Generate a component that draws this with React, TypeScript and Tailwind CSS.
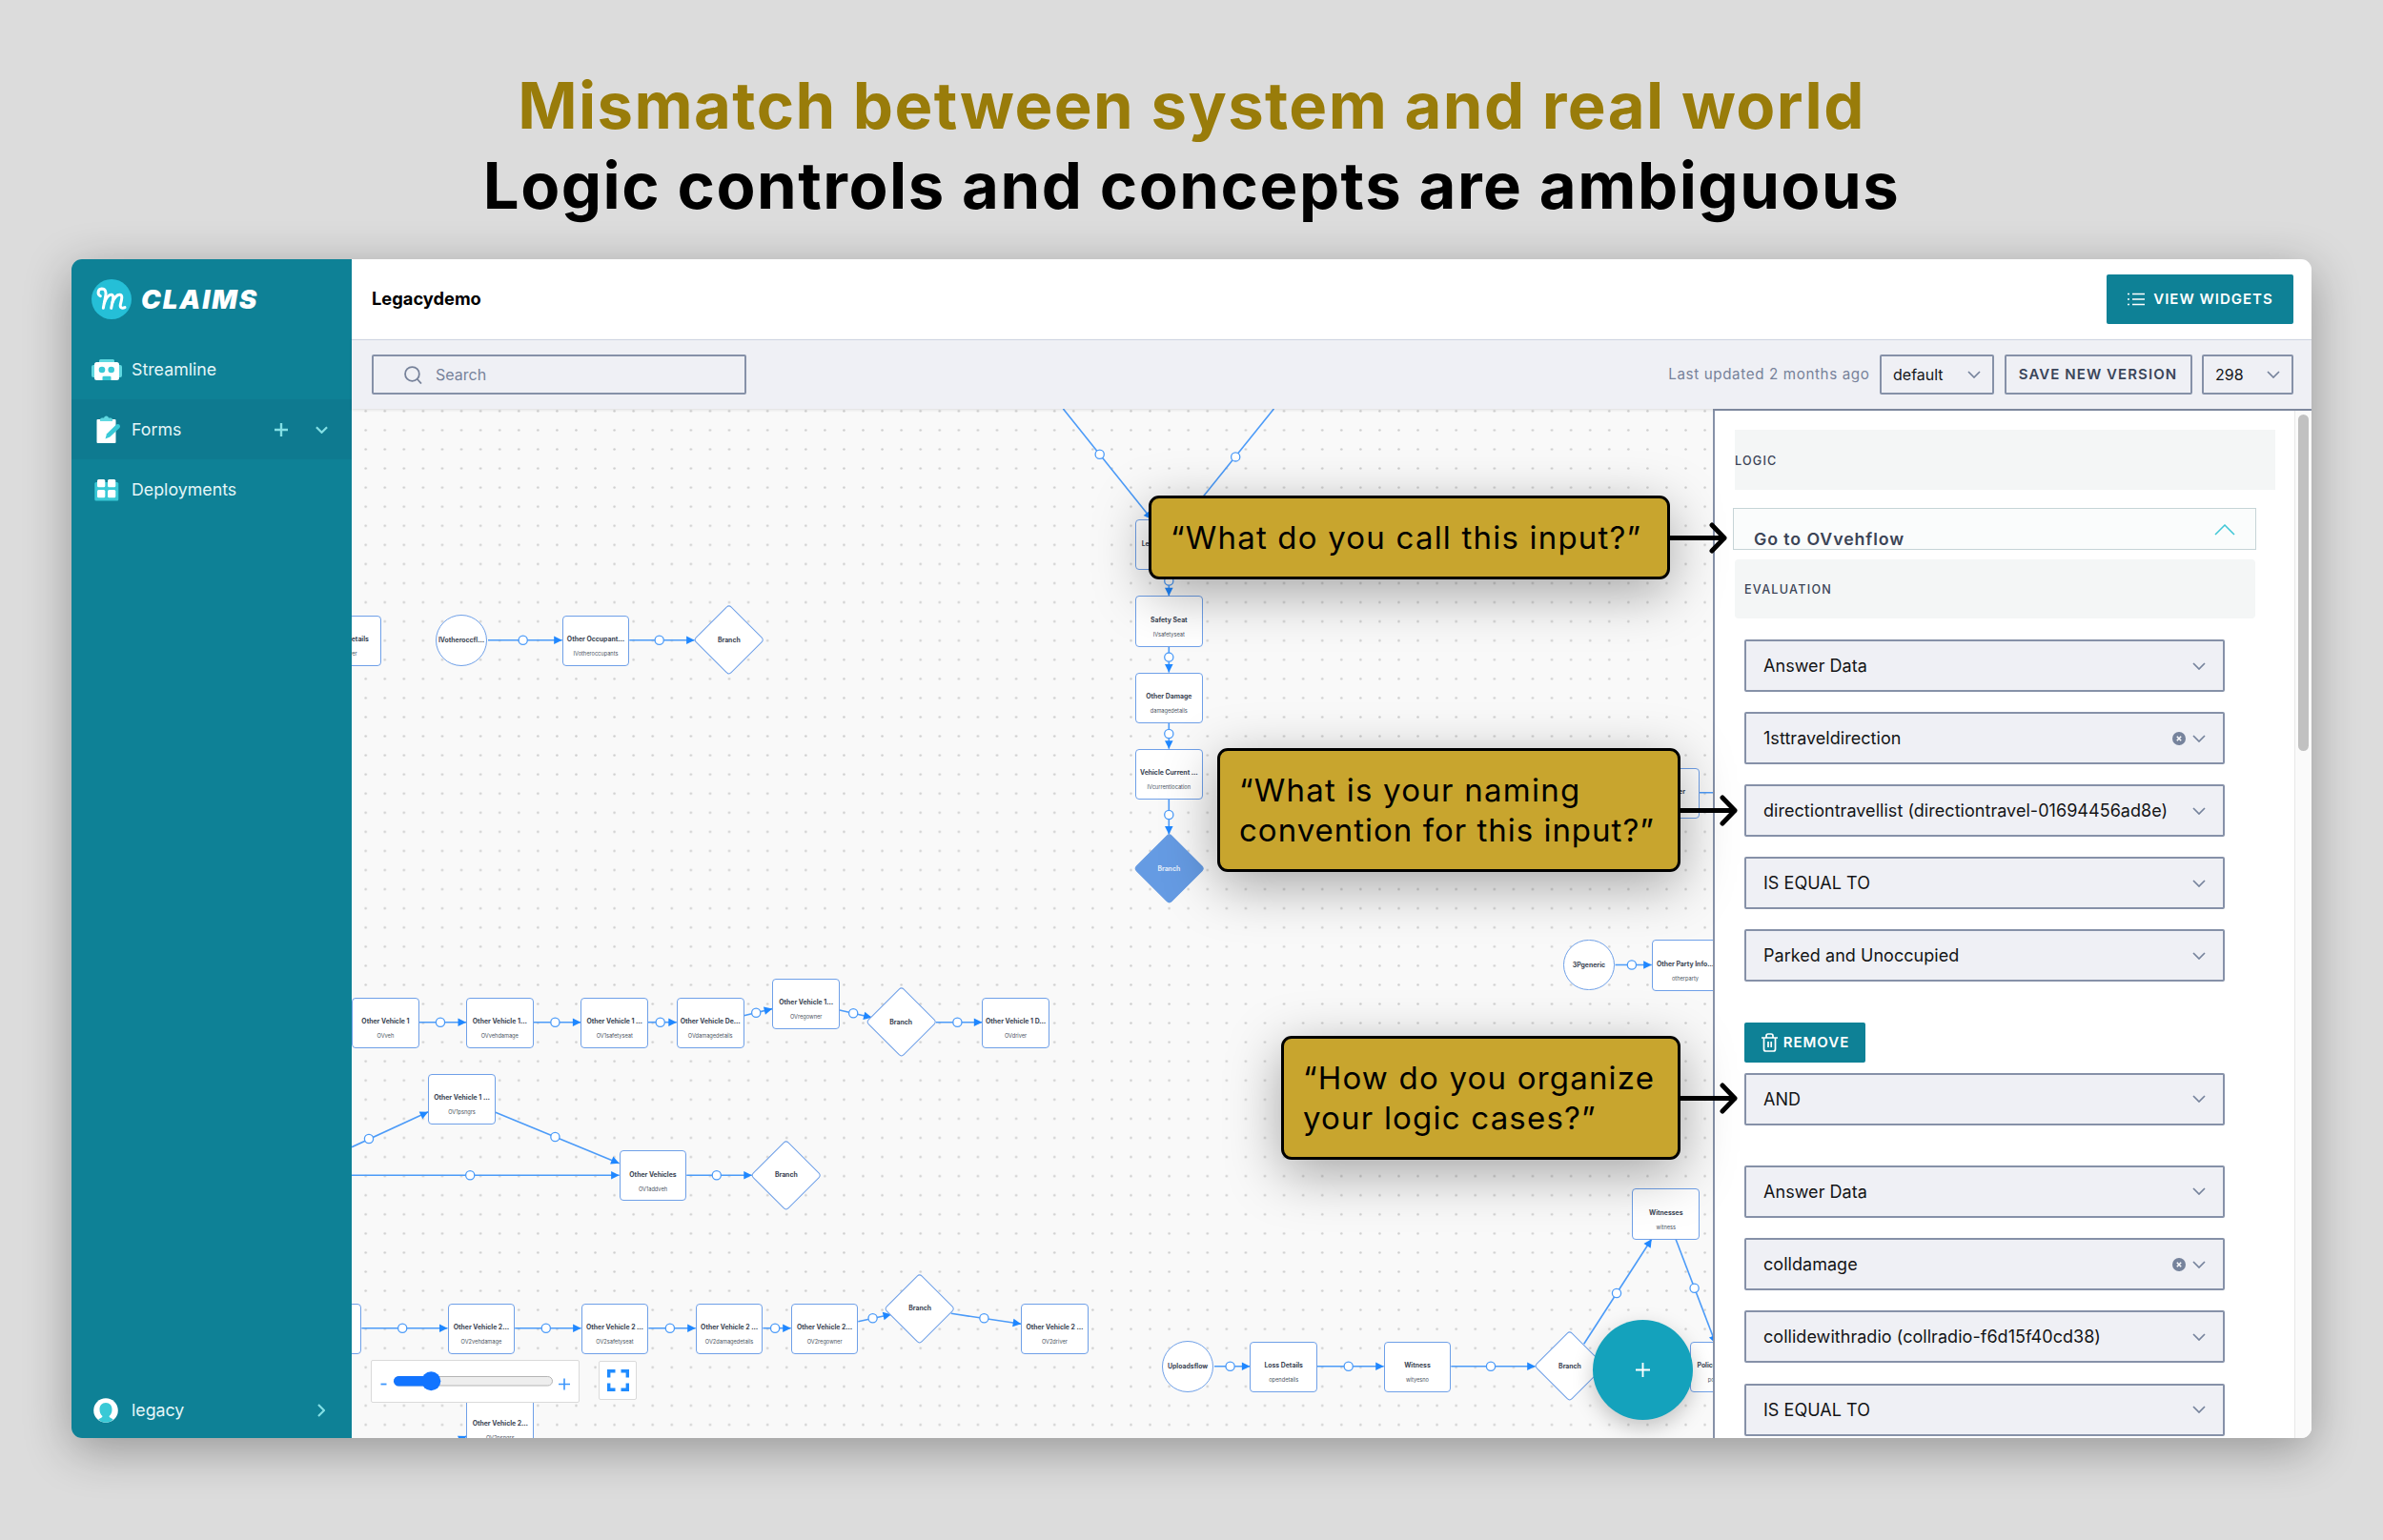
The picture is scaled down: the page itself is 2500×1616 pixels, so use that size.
import React from 'react';

/* ---------- icons ---------- */

const ChevronDown = ({ className = 'h-[8px] w-[14px] text-[#76839c]' }: { className?: string }) => (
  <svg viewBox="0 0 14 8" className={className} fill="none" stroke="currentColor" strokeWidth="1.7">
    <path d="M1 1l6 6 6-6" />
  </svg>
);

const LogoMark = () => (
  <svg viewBox="62 37 126 126" className="h-[42px] w-[42px] shrink-0">
    <circle cx="125" cy="100" r="63" fill="#25bfd7" />
    <g fill="none" stroke="#fff" strokeWidth="9" strokeLinecap="round" strokeLinejoin="round">
      <path d="M90 90C80 86 81 68 94 67c12 0 15 10 12 24l-7 37" />
      <path d="M102 113c5-17 15-28 22-27 8 1 7 9 5 18l-5 24" />
      <path d="M128 110c5-15 15-25 23-24 8 1 7 9 5 18l-3 13c-2 9 4 13 14 9" />
    </g>
  </svg>
);

const RobotIcon = () => (
  <svg viewBox="0 0 32 24" className="h-[24px] w-[32px]">
    <rect x="8" y="1" width="16" height="6" rx="1.5" fill="#5fd8e0" />
    <rect x="0" y="7" width="32" height="13" rx="2" fill="#5fd8e0" />
    <rect x="3" y="4" width="26" height="19" rx="2.5" fill="#fff" />
    <circle cx="11" cy="12" r="3.3" fill="#39c9d6" />
    <circle cx="20.7" cy="12" r="3.3" fill="#39c9d6" />
    <path d="M11.5 23v-3q0-1.300 1.300-1.300h6.400q1.300 0 1.300 1.300v3z" fill="#39c9d6" />
  </svg>
);

const ClipboardIcon = () => (
  <svg viewBox="0 0 26 30" className="ml-[5px] h-[30px] w-[26px]">
    <rect x="0.500" y="4" width="20" height="25" rx="1" fill="#fff" />
    <path d="M4 6V4.500Q4 2.500 6 2.500h2Q8.500.500 10.500.500T13 2.500h2q2 0 2 2V6z" fill="#5fd8e0" />
    <path d="M9.500 24.500l1.500-5.200L21 9.600q1.700-1.300 3.300 0 1.400 1.700.2 3.300L14.300 22.600z" fill="#39c9d6" />
  </svg>
);

const DeployIcon = () => (
  <svg viewBox="0 0 26 24" className="ml-[3px] h-[24px] w-[26px]">
    <rect x="0.300" y="4" width="25" height="19.500" rx="1.500" fill="#39c9d6" />
    <rect x="3" y="1" width="8.300" height="8.300" rx="1.500" fill="#fff" />
    <rect x="14" y="1" width="8.300" height="8.300" rx="1.500" fill="#fff" />
    <rect x="3" y="12" width="8.300" height="8.300" rx="1.500" fill="#fff" />
    <rect x="14" y="12" width="8.300" height="8.300" rx="1.500" fill="#fff" />
  </svg>
);

const UserIcon = () => (
  <svg viewBox="0 0 26 26" className="ml-[2px] h-[26px] w-[26px]">
    <circle cx="13" cy="13" r="12.800" fill="#fff" />
    <path
      d="M13 5c4.200 0 6.500 3.200 6.500 7 0 3-1 5.600-3 7 0 1.500 2 1.800 4.300 3.500Q17.500 25.800 13 25.800T5.200 22.500C7.500 20.800 9.500 20.500 9.500 19c-2-1.400-3-4-3-7 0-3.800 2.300-7 6.500-7z"
      fill="#39c9d6"
    />
  </svg>
);

/* ---------- sidebar ---------- */

function NavItem({ icon, label, active }: { icon: React.ReactNode; label: string; active?: boolean }) {
  return (
    <div className={`flex h-[63px] items-center pl-[21px] text-[17.8px] text-[#e4f6f8] ${active ? 'bg-[#0e7a90]' : ''}`}>
      <div className="flex w-[42px] items-center">{icon}</div>
      <span className="pt-[2px]">{label}</span>
      {active && (
        <div className="ml-auto mr-[25px] flex items-center gap-[29px] text-[#83dfe4]">
          <svg viewBox="0 0 14 14" className="h-[14px] w-[14px]" stroke="currentColor" strokeWidth="2.400">
            <path d="M7 0v14M0 7h14" />
          </svg>
          <ChevronDown className="h-[8px] w-[13px] stroke-[2.400] text-[#83dfe4]" />
        </div>
      )}
    </div>
  );
}

function Sidebar() {
  return (
    <aside className="flex w-[294px] shrink-0 flex-col bg-[#0e8196]">
      <div className="flex h-[83px] items-center gap-[10px] pl-[21px]">
        <LogoMark />
        <span className="pt-[3px] text-[27.800px] font-black italic tracking-[1.900px] text-white">CLAIMS</span>
      </div>
      <div className="pt-[1px]">
        <NavItem icon={<RobotIcon />} label="Streamline" />
        <NavItem icon={<ClipboardIcon />} label="Forms" active />
        <NavItem icon={<DeployIcon />} label="Deployments" />
      </div>
      <div className="mt-auto flex h-[59px] items-center pl-[21px] text-[17.800px] text-[#e4f6f8]">
        <div className="w-[42px]">
          <UserIcon />
        </div>
        <span className="pt-[1px]">legacy</span>
        <svg viewBox="0 0 8 14" className="ml-auto mr-[28px] h-[14px] w-[8px]" fill="none" stroke="#83dfe4" strokeWidth="2.200">
          <path d="M1 1l6 6-6 6" />
        </svg>
      </div>
    </aside>
  );
}

/* ---------- header and toolbar ---------- */

function Header() {
  return (
    <header className="flex h-[84px] shrink-0 items-center justify-between bg-white pl-[21px] pr-[19px]">
      <h1 className="text-[18.300px] font-bold text-black">Legacydemo</h1>
      <button className="flex h-[52px] w-[196px] items-center justify-center gap-[9px] rounded-[2px] bg-[#0e8196] pl-[1px] text-[15px] font-semibold tracking-[1px] text-white">
        <svg viewBox="0 0 18 14" className="h-[14px] w-[18px]" stroke="#fff" strokeWidth="1.700">
          <path d="M5 1.500h13M5 7h13M5 12.500h13" />
          <path d="M0 1.500h2M0 7h2M0 12.500h2" />
        </svg>
        VIEW WIDGETS
      </button>
    </header>
  );
}

function Toolbar() {
  return (
    <div className="relative z-10 flex h-[73px] shrink-0 items-center border-t-[1.500px] border-[#cfd4e2] bg-[#eff0f5] pl-[21px] pr-[19px] shadow-[0_1px_3px_rgba(0,0,0,0.12)]">
      <div className="flex h-[42px] w-[393px] items-center rounded-[2px] border-[2px] border-[#8691a8] pl-[32px] text-[16px] text-[#77829a]">
        <svg viewBox="0 0 18 18" className="mr-[14px] h-[19px] w-[19px]" fill="none" stroke="#77829a" strokeWidth="1.700">
          <circle cx="8" cy="8" r="7" />
          <path d="M13 13l4 4.500" />
        </svg>
        Search
      </div>
      <div className="ml-auto flex items-center gap-[10.500px] text-[16px] text-[#15171a]">
        <span className="text-[15.200px] tracking-[0.620px] text-[#77829a]">Last updated 2 months ago</span>
        <div className="flex h-[42px] w-[120px] items-center justify-between rounded-[2px] border-[2px] border-[#8691a8] px-[12px]">
          default <ChevronDown />
        </div>
        <button className="h-[42px] w-[197px] whitespace-nowrap rounded-[2px] border-[2px] border-[#8691a8] text-[15px] font-semibold tracking-[1.070px] text-[#3b465a]">
          SAVE NEW VERSION
        </button>
        <div className="flex h-[42px] w-[96px] items-center justify-between rounded-[2px] border-[2px] border-[#8691a8] px-[12px]">
          298 <ChevronDown />
        </div>
      </div>
    </div>
  );
}

/* ---------- flow canvas ---------- */

const OX = 369;
const OY = 429;

type Box = [number, number, string, string];

const boxes: Box[] = [
  [364.3, 672, 'Driver Details', 'IVdriver'],
  [625, 672, 'Other Occupant…', 'IVotheroccupants'],
  [1226.3, 571.6, 'Legal Guardian…', 'IVguardian'],
  [1226.3, 651.8, 'Safety Seat', 'IVsafetyseat'],
  [1226.3, 732, 'Other Damage', 'damagedetails'],
  [1226.3, 812.2, 'Vehicle Current …', 'IVcurrentlocation'],
  [1747.4, 832.2, 'Other Driver', 'driver'],
  [1768, 1012.7, 'Other Party Info…', 'otherparty'],
  [404.4, 1073, 'Other Vehicle 1', 'OVveh'],
  [524.3, 1073, 'Other Vehicle 1…', 'OVvehdamage'],
  [644.7, 1073, 'Other Vehicle 1 …', 'OV1safetyseat'],
  [745.2, 1073, 'Other Vehicle De…', 'OVdamagedetails'],
  [845.7, 1053, 'Other Vehicle 1…', 'OVregowner'],
  [1065.6, 1073, 'Other Vehicle 1 D…', 'OVdriver'],
  [484.5, 1153, 'Other Vehicle 1 …', 'OV1psngrs'],
  [685, 1233.3, 'Other Vehicles', 'OV1addveh'],
  [344, 1394, '', ''],
  [504.9, 1394, 'Other Vehicle 2…', 'OV2vehdamage'],
  [645, 1394, 'Other Vehicle 2 …', 'OV2safetyseat'],
  [765.1, 1394, 'Other Vehicle 2 …', 'OV2damagedetails'],
  [865.1, 1394, 'Other Vehicle 2…', 'OV2regowner'],
  [1106.4, 1394, 'Other Vehicle 2 …', 'OV2driver'],
  [524.8, 1494.7, 'Other Vehicle 2…', 'OV2psngrs'],
  [1346.7, 1434, 'Loss Details', 'opendetails'],
  [1487, 1434, 'Witness', 'wityesno'],
  [1808, 1434, 'Police Report I…', 'policereport'],
  [1747.8, 1273.7, 'Witnesses', 'witness'],
];

const starts: [number, number, string][] = [
  [484, 672, 'IVotheroccfl…'],
  [1666.9, 1012.7, '3Pgeneric'],
  [1246.1, 1434, 'Uploadsflow'],
];

const branches: [number, number, boolean][] = [
  [764.8, 671.8, false],
  [1226.3, 912.1, true],
  [945.2, 1072.8, false],
  [824.8, 1233.2, false],
  [965.1, 1373.5, false],
  [1647, 1433.8, false],
];

// x1, y1, x2, y2, handle x, handle y
const edges: [number, number, number, number, number, number][] = [
  [512, 671.7, 589.7, 671.7, 548.7, 671.7],
  [660.3, 671.7, 728.6, 671.7, 691.7, 671.7],
  [1115.4, 429, 1208.3, 545, 1153.7, 476.7],
  [1336.4, 429, 1243, 545, 1296.2, 479.4],
  [1226.3, 598, 1226.3, 625.3, 1226.3, 609.6],
  [1226.3, 678.4, 1226.3, 705.6, 1226.3, 689.6],
  [1226.3, 758.5, 1226.3, 785.7, 1226.3, 770],
  [1226.3, 838.8, 1226.3, 875.5, 1226.3, 855],
  [1782.8, 831.8, 1840, 831.8, 1830, 831.8],
  [1694.500, 1012.5, 1732.7, 1012.5, 1711.9, 1012.5],
  [439.7, 1072.7, 489, 1072.7, 462, 1072.7],
  [559.6, 1072.7, 609.4, 1072.7, 582.4, 1072.7],
  [680, 1072.7, 709.8, 1072.7, 692.7, 1072.7],
  [780.4, 1065.7, 810.2, 1058.6, 793.2, 1062.7],
  [880.9, 1060, 914.6, 1067.8, 895.2, 1063.3],
  [982, 1072.7, 1030.3, 1072.7, 1004.4, 1072.7],
  [369, 1203.7, 449.2, 1166.8, 387, 1195],
  [519.8, 1167.3, 649.6, 1220.7, 582.4, 1193],
  [369, 1233.3, 649.6, 1233.3, 493.2, 1233.3],
  [720.3, 1233.3, 788.8, 1233.3, 751.8, 1233.3],
  [379.4, 1393.7, 469.500, 1393.7, 422.2, 1393.7],
  [540.2, 1393.7, 609.6, 1393.7, 572.8, 1393.7],
  [680.4, 1393.7, 729.7, 1393.7, 702.9, 1393.7],
  [800.4, 1393.7, 829.7, 1393.7, 813.1, 1393.7],
  [900.3, 1386.7, 935, 1379.3, 915.6, 1383.2],
  [997.8, 1378.3, 1071.2, 1389.3, 1032.4, 1383.3],
  [409, 1544, 489.5, 1507, 440, 1530],
  [1274, 1433.7, 1311.4, 1433.7, 1290.6, 1433.7],
  [1382, 1433.7, 1451.7, 1433.7, 1414.7, 1433.7],
  [1522.3, 1433.7, 1610.7, 1433.7, 1564, 1433.7],
  [1661.7, 1410.3, 1732.7, 1300.3, 1696, 1357],
  [1758, 1300.3, 1800, 1410, 1777.6, 1351.7],
];

function Canvas() {
  return (
    <div className="relative w-[1428px] shrink-0 overflow-hidden bg-[#f9f9f9]">
      <svg viewBox="369 429 1428 1080" className="absolute inset-0 h-full w-full">
        <defs>
          <pattern id="dots" x="373.700" y="421.300" width="20.070" height="20.070" patternUnits="userSpaceOnUse">
            <circle cx="10" cy="10" r="1.250" fill="#cdcdcd" />
          </pattern>
        </defs>
        <rect x="369" y="429" width="1428" height="1080" fill="url(#dots)" />
        {edges.map(([x1, y1, x2, y2, hx, hy], i) => {
          const angle = (Math.atan2(y2 - y1, x2 - x1) * 180) / Math.PI;
          return (
            <g key={i}>
              <line x1={x1} y1={y1} x2={x2} y2={y2} stroke="#4c9bf8" strokeWidth="1.600" />
              <path d="M0 0l-8.500-4.300v8.600z" fill="#1f87ff" transform={`translate(${x2} ${y2}) rotate(${angle})`} />
              <circle cx={hx} cy={hy} r="4.600" fill="#fff" stroke="#4c9bf8" strokeWidth="1.300" />
            </g>
          );
        })}
      </svg>
      {boxes.map(([x, y, title, sub], i) => (
        <div
          key={i}
          style={{ left: x - OX - 35.4, top: y - OY - 26.5 }}
          className="absolute h-[53.400px] w-[70.800px] rounded-[4px] border border-[#6fa0e8] bg-white text-center"
        >
          <div className="mt-[19.800px] whitespace-nowrap text-[6.870px] font-bold leading-[10px] text-[#3a4453]">{title}</div>
          <div className="mt-[5px] whitespace-nowrap text-[5.650px] leading-[10px] text-[#4c5563]">{sub}</div>
        </div>
      ))}
      {starts.map(([x, y, title]) => (
        <div
          key={title}
          style={{ left: x - OX - 26.7, top: y - OY - 26.7 }}
          className="absolute flex h-[53.400px] w-[53.400px] items-center justify-center whitespace-nowrap rounded-full border border-[#6fa0e8] bg-white text-[6.870px] font-bold text-[#3a4453]"
        >
          {title}
        </div>
      ))}
      {branches.map(([x, y, selected]) => (
        <div
          key={`${x}`}
          style={{ left: x - OX - 26.7, top: y - OY - 26.7 }}
          className="absolute flex h-[53.400px] w-[53.400px] items-center justify-center"
        >
          <div
            className={`absolute inset-0 rotate-45 rounded-[4px] border ${
              selected ? 'border-[#659be3] bg-[#659be3]' : 'border-[#6fa0e8] bg-white'
            }`}
          />
          <span className={`relative text-[6.870px] font-bold ${selected ? 'text-[#e3edfa]' : 'text-[#3a4453]'}`}>Branch</span>
        </div>
      ))}

      <div className="absolute bottom-[37.500px] left-[20px] flex h-[45px] w-[219px] items-center rounded-[2px] border-[1.500px] border-[#dadada] bg-white pl-[9px]">
        <svg viewBox="0 0 200 30" className="h-[30px] w-[200px]">
          <path d="M0.500 18.500h6" stroke="#3d96fb" strokeWidth="1.800" />
          <path d="M187 18.500h12M193 12.500v12" stroke="#3d96fb" strokeWidth="1.600" />
          <rect x="14.500" y="10.500" width="166" height="9.500" rx="4.750" fill="#eeeeee" stroke="#b5b5b5" />
          <rect x="14" y="10" width="42" height="10.500" rx="5.250" fill="#1274ff" />
          <circle cx="53.300" cy="15.300" r="10" fill="#1274ff" />
        </svg>
      </div>
      <div className="absolute bottom-[40px] left-[259px] flex h-[41px] w-[40px] items-center justify-center rounded-[2px] border-[1.500px] border-[#dadada] bg-white">
        <svg viewBox="0 0 23 23" className="h-[23px] w-[23px]" fill="none" stroke="#1f8bff" strokeWidth="3.400">
          <path d="M1.700 8.500V1.700H8.500M14.500 1.700h6.800v6.800M21.300 14.500v6.800h-6.800M8.500 21.300H1.700v-6.800" />
        </svg>
      </div>
      <button className="absolute bottom-[19px] left-[1302px] flex h-[105px] w-[105px] items-center justify-center rounded-full bg-[#14a2bc] shadow-[0_8px_22px_rgba(0,0,0,0.22)]">
        <svg viewBox="0 0 16 16" className="h-[15px] w-[15px]" stroke="#fff" strokeWidth="2">
          <path d="M8 0v16M0 8h16" />
        </svg>
      </button>
    </div>
  );
}

/* ---------- logic panel ---------- */

function Field({ value, clearable }: { value: string; clearable?: boolean }) {
  return (
    <div className="flex h-[55px] w-[504px] shrink-0 items-center rounded-[2px] border-[2px] border-[#8691a8] bg-[#eff0f5] pl-[18px] pr-[18px] text-[18px] tracking-[0.040px] text-[#131416]">
      <span className="whitespace-nowrap">{value}</span>
      <div className="ml-auto flex items-center gap-[7px]">
        {clearable && (
          <svg viewBox="0 0 14 14" className="h-[14px] w-[14px]">
            <circle cx="7" cy="7" r="7" fill="#76839c" />
            <path d="M4.800 4.800l4.400 4.400M9.200 4.800L4.800 9.200" stroke="#fff" strokeWidth="1.500" />
          </svg>
        )}
        <ChevronDown />
      </div>
    </div>
  );
}

function LogicPanel() {
  return (
    <div className="flex min-w-0 flex-1 border-l-[2px] border-t-[2px] border-[#8691a8] bg-white shadow-[0_0_24px_rgba(0,0,0,0.14)]">
      <div className="flex flex-1 flex-col overflow-hidden pl-[21px] pt-[20px]">
        <div className="flex h-[63px] w-[567px] shrink-0 items-center bg-[#f4f6f6] pt-[3px] text-[12.600px] font-medium tracking-[1.200px] text-[#3b4456]">
          LOGIC
        </div>
        <div className="-ml-[2px] mt-[19px] flex h-[44px] w-[549px] shrink-0 items-center justify-between border-[1.500px] border-[#c6d4d7] bg-[#fafcfc] pl-[21px] pr-[21px]">
          <span className="mt-[21px] text-[17.800px] font-semibold leading-none tracking-[0.900px] text-[#3b4456]">Go to OVvehflow</span>
          <svg viewBox="0 0 22 12" className="mt-[2px] h-[12px] w-[22px]" fill="none" stroke="#3fc6d6" strokeWidth="1.500">
            <path d="M1 11L11 1l10 10" />
          </svg>
        </div>
        <div className="mt-[10px] flex h-[62px] w-[546px] shrink-0 items-center rounded-[4px] bg-[#f4f6f6] pl-[10px] pt-[2px] text-[12.600px] font-medium tracking-[1.270px] text-[#3b4456]">
          EVALUATION
        </div>
        <div className="mt-[22px] flex flex-col gap-[21.100px] pl-[10px]">
          <Field value="Answer Data" />
          <Field value="1sttraveldirection" clearable />
          <Field value="directiontravellist (directiontravel-01694456ad8e)" />
          <Field value="IS EQUAL TO" />
          <Field value="Parked and Unoccupied" />
        </div>
        <div className="mt-[42.500px] flex shrink-0 flex-col gap-[11px] pl-[10px]">
          <button className="flex h-[42px] w-[127px] items-center justify-center gap-[6px] rounded-[2px] bg-[#0e8196] pl-[1px] text-[15px] font-semibold tracking-[1px] text-white">
            <svg viewBox="0 0 17 20" className="h-[20px] w-[17px]" fill="none" stroke="#fff" strokeWidth="1.700">
              <path d="M0 5h17M5 5V3q0-2 2-2h3q2 0 2 2v2M2.500 5v12q0 2 2 2h8q2 0 2-2V5M7 9v6M10.200 9v6" />
            </svg>
            REMOVE
          </button>
          <Field value="AND" />
        </div>
        <div className="mt-[42px] flex flex-col gap-[21.300px] pl-[10px]">
          <Field value="Answer Data" />
          <Field value="colldamage" clearable />
          <Field value="collidewithradio (collradio-f6d15f40cd38)" />
          <Field value="IS EQUAL TO" />
        </div>
      </div>
      <div className="flex w-[18px] shrink-0 justify-center border-l border-[#e8e8e8] bg-[#fafafa] pt-[4px]">
        <div className="h-[353px] w-[11px] rounded-full bg-[#c1c1c1]" />
      </div>
    </div>
  );
}

/* ---------- annotations ---------- */

function Callout({ place, arrow, children }: { place: string; arrow: number; children: React.ReactNode }) {
  return (
    <div
      className={`absolute flex items-center rounded-[11px] border-[3px] border-black bg-[#c8a52e] pb-px pl-[20px] text-[33px] leading-[42px] text-black shadow-[0_14px_56px_rgba(0,0,0,0.34)] ${place}`}
    >
      <div className="whitespace-nowrap">{children}</div>
      <svg
        viewBox={`0 0 ${arrow} 36`}
        style={{ width: arrow, height: 36 }}
        className="absolute left-full top-1/2 -translate-y-1/2"
        fill="none"
        stroke="#000"
        strokeWidth="5"
        strokeLinejoin="round"
        strokeLinecap="round"
      >
        <path d={`M0 18.500H${arrow - 3}M${arrow - 16} 5L${arrow - 3} 18.500L${arrow - 16} 32`} />
      </svg>
    </div>
  );
}

export default function App() {
  return (
    <div className="relative flex h-[1616px] w-[2500px] flex-col overflow-hidden bg-[#dcdcdc] font-['Inter',sans-serif]">
      <div className="h-[272px] shrink-0 pt-[69px] text-center text-[67px] font-bold leading-[83.700px]">
        <p className="tracking-[1.400px] text-[#997c0a]">Mismatch between system and real world</p>
        <p className="tracking-[1.500px] text-black">Logic controls and concepts are ambiguous</p>
      </div>

      <div className="ml-[75px] flex h-[1237px] w-[2350px] shrink-0 overflow-hidden rounded-[11px] shadow-[0_12px_50px_rgba(0,0,0,0.320)]">
        <Sidebar />
        <main className="flex min-w-0 flex-1 flex-col">
          <Header />
          <Toolbar />
          <div className="flex min-h-0 flex-1">
            <Canvas />
            <LogicPanel />
          </div>
        </main>
      </div>

      <Callout place="left-[1205px] top-[520px] h-[88px] w-[547px] tracking-[1.200px]" arrow={63}>
        “What do you call this input?”
      </Callout>
      <Callout place="left-[1277px] top-[785px] h-[130px] w-[486px] tracking-[1px]" arrow={63}>
        <span className="tracking-[1.250px]">“What is your naming</span>
        <br />
        convention for this input?”
      </Callout>
      <Callout place="left-[1344px] top-[1087px] h-[130px] w-[419px] tracking-[1.200px]" arrow={63}>
        “How do you organize
        <br />
        your logic cases?”
      </Callout>
    </div>
  );
}
